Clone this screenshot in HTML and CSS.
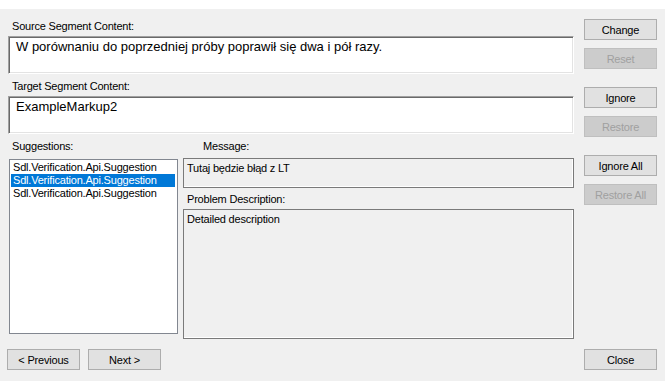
FILE: index.html
```html
<!DOCTYPE html>
<html lang="en">

<head>
    <meta charset="UTF-8">
    <meta name="viewport" content="width=device-width, initial-scale=1.0">
    <title>Verification Results</title>

    <link rel="stylesheet" href="styles.css">
</head>

<body>
    <div class="titlebar"></div>

    <div class="dialog">
        <div class="content">
            <div class="field-label source-label">Source Segment Content:</div>
            <div class="segment-box">W porównaniu do poprzedniej próby poprawił się dwa i pół razy.</div>

            <div class="field-label target-label">Target Segment Content:</div>
            <div class="segment-box">ExampleMarkup2</div>

            <div class="details">
                <div class="suggest-col">
                    <div class="field-label">Suggestions:</div>
                    <ul class="suggest-list">
                        <li>Sdl.Verification.Api.Suggestion</li>
                        <li class="selected">Sdl.Verification.Api.Suggestion</li>
                        <li>Sdl.Verification.Api.Suggestion</li>
                    </ul>
                </div>

                <div class="message-col">
                    <div class="field-label message-label">Message:</div>
                    <div class="readonly-box message-box">Tutaj będzie błąd z LT</div>
                    <div class="field-label problem-label">Problem Description:</div>
                    <div class="readonly-box problem-box">Detailed description</div>
                </div>
            </div>

            <div class="nav-buttons">
                <button class="btn">&lt; Previous</button>
                <button class="btn">Next &gt;</button>
            </div>
        </div>

        <div class="side-buttons">
            <button class="btn">Change</button>
            <button class="btn" disabled>Reset</button>
            <button class="btn group">Ignore</button>
            <button class="btn" disabled>Restore</button>
            <button class="btn group">Ignore All</button>
            <button class="btn" disabled>Restore All</button>
            <button class="btn close">Close</button>
        </div>
    </div>
</body>

</html>
```

FILE: styles.css
```css
body {
    margin: 0;
    background-color: #f0f0f0;
    font-family: "Liberation Sans", Arial, sans-serif;
    font-size: 11px;
    letter-spacing: -0.2px;
    color: #000;
    overflow: hidden;
}

.titlebar {
    height: 9px;
    background-color: #fff;
}

.dialog {
    display: flex;
    height: 372px;
}

.content {
    width: 566px;
    margin-left: 8px;
    padding-top: 11px;
}

.field-label {
    height: 13px;
    line-height: 13px;
    padding-left: 4px;
    margin-bottom: 3px;
}

.target-label {
    margin-top: 6px;
}

.segment-box {
    height: 34px;
    box-sizing: content-box;
    border: 1px solid;
    border-color: #a0a0a0 #fff #fff #a0a0a0;
    box-shadow: inset 1px 1px 0 #696969, inset -1px -1px 0 #e3e3e3;
    background-color: #fff;
    padding: 2px 0 0 7px;
    font-size: 13px;
    line-height: 16px;
    letter-spacing: 0;
}

.details {
    display: flex;
    margin-top: 6px;
}

.suggest-col {
    width: 169px;
    margin-left: 1px;
}

.suggest-col .field-label {
    padding-left: 3px;
    margin-bottom: 6px;
}

.suggest-list {
    list-style: none;
    margin: 0;
    padding: 1px 0 0 1px;
    height: 172px;
    border: 1px solid #828790;
    background-color: #fff;
}

.suggest-list li {
    height: 13px;
    line-height: 13px;
    padding-left: 2px;
    width: 162px;
}

.suggest-list li.selected {
    background-color: #0078d7;
    color: #fff;
}

.message-col {
    width: 391px;
    margin-left: 5px;
}

.message-label {
    padding-left: 20px;
    margin-bottom: 5px;
}

.problem-label {
    margin-top: 5px;
}

.readonly-box {
    border: 1px solid #7a7a7a;
    box-shadow: inset -1px -1px 0 #fff;
    padding: 3px 0 0 3px;
    line-height: 13px;
}

.message-box {
    height: 25px;
}

.problem-box {
    height: 125px;
}

.nav-buttons {
    display: flex;
    gap: 8px;
    margin-top: 10px;
    margin-left: -1px;
}

.btn {
    width: 73px;
    height: 21px;
    padding: 0;
    border: 1px solid #adadad;
    background-color: #e1e1e1;
    font-family: "Liberation Sans", Arial, sans-serif;
    font-size: 11px;
    letter-spacing: -0.2px;
    color: #000;
}

.btn:disabled {
    background-color: #cccccc;
    border-color: #bfbfbf;
    color: #a0a0a0;
}

.side-buttons {
    display: flex;
    flex-direction: column;
    gap: 8px;
    margin-left: 10px;
    padding-top: 10px;
    padding-bottom: 11px;
}

.side-buttons .group {
    margin-top: 10px;
}

.side-buttons .close {
    margin-top: auto;
}
```
